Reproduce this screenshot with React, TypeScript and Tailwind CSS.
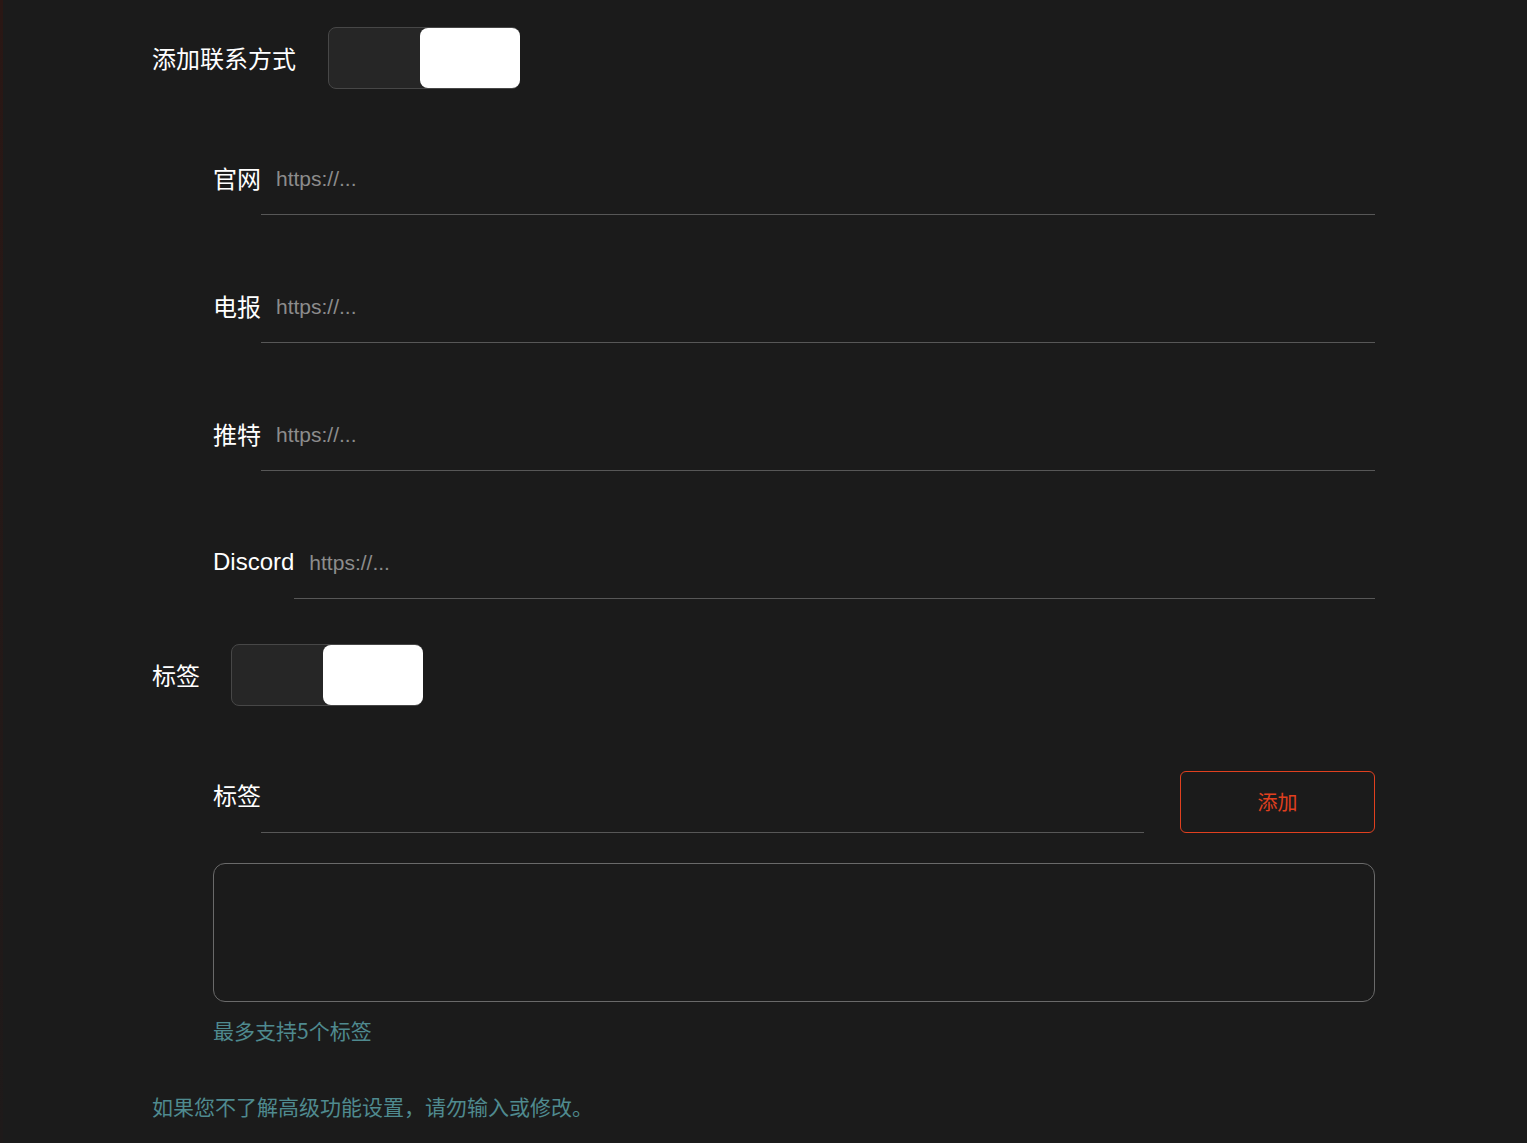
import React from "react";

const cjk = "font-['Noto_Sans_CJK_SC','Microsoft_YaHei',sans-serif]";

function Toggle() {
  return (
    <div className="flex h-[62px] w-[192px] rounded-[8px] border border-[#474747] bg-[#262626]">
      <div className="flex-1" />
      <div className="my-0 -mr-px w-[100px] rounded-[8px] bg-white" />
    </div>
  );
}

function LinkRow({ label, latin }: { label: string; latin?: boolean }) {
  return (
    <div className="flex h-[72px] items-stretch">
      <span
        className={`flex items-center pb-[2px] text-[24px] text-white ${
          latin ? "font-['Liberation_Sans',Arial,sans-serif]" : cjk
        }`}
      >
        {label}
      </span>
      <div className="flex flex-1 items-center border-b border-[#575757]">
        <input
          placeholder="https://..."
          className="w-full bg-transparent pl-[15px] font-['Liberation_Sans',Arial,sans-serif] text-[21px] text-white outline-none placeholder:text-[#8c8c8c]"
        />
      </div>
    </div>
  );
}

export default function App() {
  return (
    <div className={`flex min-h-screen bg-[#1b1b1b] ${cjk}`}>
      <div className="w-[3px] bg-gradient-to-b from-[#2a1714] to-[#1e1a1a]" />
      <div className="flex flex-1 flex-col pl-[149px] pr-[152px] pt-[27px] pb-[20px]">
        <div className="flex items-center gap-[32px]">
          <span className="text-[24px] text-white">添加联系方式</span>
          <Toggle />
        </div>

        <div className="mt-[54px] flex flex-col gap-[56px] pl-[61px]">
          <LinkRow label="官网" />
          <LinkRow label="电报" />
          <LinkRow label="推特" />
          <LinkRow label="Discord" latin />
        </div>

        <div className="mt-[45px] flex items-center gap-[31px]">
          <span className="text-[24px] text-white">标签</span>
          <Toggle />
        </div>

        <div className="mt-[55px] flex flex-col pl-[61px]">
          <div className="flex h-[72px] items-end gap-[36px]">
            <div className="flex h-full flex-1 items-stretch">
              <span className="flex items-center pb-[4px] text-[24px] text-white">标签</span>
              <div className="flex flex-1 items-center border-b border-[#575757]">
                <input className="w-full bg-transparent pl-[15px] text-[20px] text-white outline-none" />
              </div>
            </div>
            <button className="h-[62px] w-[195px] rounded-[6px] border border-[#e0401f] text-[20px] text-[#e0401f]">
              添加
            </button>
          </div>

          <textarea className="mt-[30px] h-[139px] w-full resize-none rounded-[12px] border border-[#6a6a6a] bg-transparent p-3 text-[20px] text-white outline-none" />

          <p className="mt-[13px] text-[21px] text-[#4f8a8f]">最多支持5个标签</p>
        </div>

        <p className="mt-[44px] text-[21px] text-[#4f8a8f]">如果您不了解高级功能设置，请勿输入或修改。</p>
      </div>
    </div>
  );
}
